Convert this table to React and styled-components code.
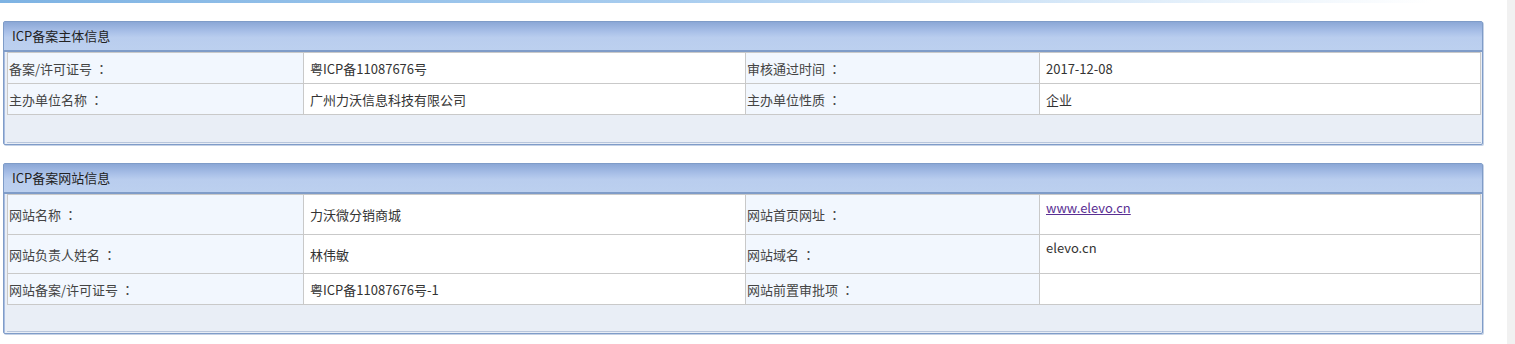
import React from 'react';
import styled, {createGlobalStyle} from 'styled-components';

const GlobalStyle = createGlobalStyle`
  html, body {
    margin: 0;
    padding: 0;
    background: #fff;
  }
  body {
    font-family: "Noto Sans CJK SC", "Liberation Sans", sans-serif;
    font-size: 13px;
    color: #333;
    text-spacing-trim: space-all;
  }
`;

const subject = [
    [['备案/许可证号', '粤ICP备11087676号'], ['审核通过时间', '2017-12-08']],
    [['主办单位名称', '广州力沃信息科技有限公司'], ['主办单位性质', '企业']],
];

const site = [
    [['网站名称', '力沃微分销商城'], ['网站首页网址', 'www.elevo.cn', 'link']],
    [['网站负责人姓名', '林伟敏'], ['网站域名', 'elevo.cn', 'top']],
    [['网站备案/许可证号', '粤ICP备11087676号-1'], ['网站前置审批项', '']],
];

const tallRows = [40, 39];

const InfoPanel = ({title, rows, tall}) => (
    <Panel>
        <Header>{title}</Header>
        <Body>
            <Table>
                <colgroup>
                    <col style={{width: 296}}/>
                    <col style={{width: 442}}/>
                    <col style={{width: 294}}/>
                    <col/>
                </colgroup>
                <tbody>
                {rows.map((row, i) => (
                    <Row key={i} $h={tall && tallRows[i] ? tallRows[i] : 31}>
                        {row.map(([label, value, kind], j) => (
                            <React.Fragment key={j}>
                                <Label>{label}<Colon>：</Colon></Label>
                                <Value $top={!!kind}>
                                    {kind === 'link' ? <Link href="#">{value}</Link> : value}
                                </Value>
                            </React.Fragment>
                        ))}
                    </Row>
                ))}
                </tbody>
            </Table>
            <Footer $h={tall ? 26 : 27}/>
        </Body>
    </Panel>
);

const App = () => (
    <>
        <GlobalStyle/>
        <Page>
            <Main>
                <TopLine/>
                <InfoPanel title="ICP备案主体信息" rows={subject}/>
                <InfoPanel title="ICP备案网站信息" rows={site} tall/>
            </Main>
            <Scroll/>
        </Page>
    </>
);

const Page = styled.div`
  display: flex;
  height: 344px;
  overflow: hidden;
`;

const Main = styled.div`
  flex: 1;
  display: flex;
  flex-direction: column;
  gap: 18px;
`;

const Scroll = styled.div`
  width: 8px;
  background: #f1f1f1;
`;

const TopLine = styled.div`
  height: 3px;
  background: linear-gradient(to right, #7eb3e3 0%, #a9cdef 45%, #e6f1fb 80%, #fff 95%);
`;

const Panel = styled.div`
  margin-left: 3px;
  width: 1478px;
  border: 1px solid #7f9cc8;
  border-radius: 2px;
  background: #e9eef6;
  box-shadow: 1px 1px 0 #c5d2e6;
`;

const Header = styled.div`
  height: 28px;
  line-height: 27px;
  padding-left: 8px;
  color: #222;
  background: linear-gradient(to bottom, #8ba7d6 0%, #a9c0e8 35%, #b9cdee 55%, #bcd0ef 100%);
  border-bottom: 2px solid #7f9cc8;
`;

const Body = styled.div`
  padding: 0 1px 1px 2px;
  border-left: 1px solid #a9bde0;
`;

const Table = styled.table`
  width: 100%;
  border-collapse: collapse;
  table-layout: fixed;
  background: #fff;
`;

const Row = styled.tr`
  height: ${p => p.$h}px;

  td {
    border: 1px solid #c9c9c9;
  }
`;

const Label = styled.td`
  padding: 0 1px;
  background: #f2f7fe;
  color: #444;
  vertical-align: middle;
`;

// centred full-width colon, as drawn by the JP face
const Colon = styled.span`
  display: inline-block;
  width: 13px;
  text-align: center;
  margin-left: 3px;
  font-family: "Noto Sans CJK JP", sans-serif;
`;

const Value = styled.td`
  padding: ${p => p.$top ? '3px 6px 0' : '0 6px'};
  color: #333;
  vertical-align: ${p => p.$top ? 'top' : 'middle'};
`;

const Link = styled.a`
  color: #5a2f93;
  text-decoration: underline;
`;

const Footer = styled.div`
  height: ${p => p.$h}px;
  background: #e9eef6;
  border-bottom: 1px solid #b8c6dc;
`;

export default App;
